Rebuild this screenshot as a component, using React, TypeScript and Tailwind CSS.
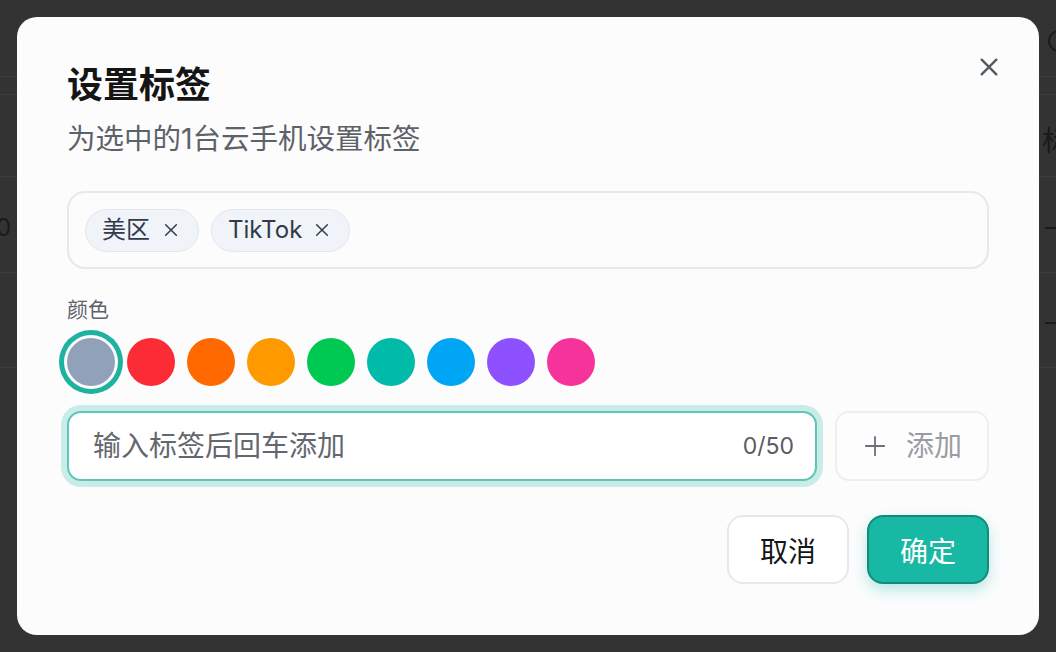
import React from "react";

const font = { fontFamily: 'Inter, "Noto Sans CJK SC", sans-serif' };

function XIcon({ size, stroke, className }: { size: number; stroke: number; className?: string }) {
  return (
    <svg width={size} height={size} viewBox="0 0 24 24" fill="none" stroke="currentColor" strokeWidth={stroke} strokeLinecap="round" className={className}>
      <path d="M4 4L20 20M20 4L4 20" />
    </svg>
  );
}

const colors = [
  "bg-red-500",
  "bg-orange-500",
  "bg-amber-500",
  "bg-green-500",
  "bg-teal-500",
  "bg-sky-500",
  "bg-violet-500",
  "bg-pink-500",
];

export default function App() {
  return (
    <div className="relative w-[1056px] h-[652px] overflow-hidden bg-[#333333]" style={font}>
      {/* background page (dimmed) */}
      <div className="absolute inset-0 flex flex-col">
        <div className="h-[77px] border-b border-[#3d3d3d]" />
        <div className="h-[18px] border-b border-[#3d3d3d]" />
        <div className="h-[82px] border-b border-[#3d3d3d]" />
        <div className="h-[96px] border-b border-[#3d3d3d]" />
        <div className="h-[95px] border-b border-[#3d3d3d]" />
      </div>
      <div className="absolute left-[-4px] top-[210px] text-[24px] text-[#1a1a1a]">0</div>
      <div className="absolute left-[1048px] top-[30px] w-[22px] h-[22px] rounded-full border-2 border-[#1c1c1c]" />
      <div className="absolute left-[1042px] top-[120px] text-[28px] text-[#1a1a1a]">标</div>
      <div className="absolute left-[1045px] top-[227px] w-[12px] h-[2px] bg-[#1a1a1a]" />
      <div className="absolute left-[1045px] top-[322px] w-[12px] h-[2px] bg-[#1a1a1a]" />

      {/* modal */}
      <div className="absolute inset-0 flex items-center justify-center">
        <div className="relative w-[1022px] h-[618px] rounded-[20px] bg-[#fcfcfd] px-[50px] pt-[46px] flex flex-col">
          <button className="absolute right-[39px] top-[39px] text-[#555b63]">
            <XIcon size={22} stroke={2.6} />
          </button>

          <div className="h-[44px] leading-[44px] text-[36px] font-bold text-[#151515]">设置标签</div>
          <div className="mt-[14px] h-[36px] leading-[36px] text-[28.5px] text-[#5d6168]">为选中的1台云手机设置标签</div>

          <div className="mt-[34px] h-[78px] rounded-[18px] border-2 border-[#e7e8ec] flex items-center gap-[12px] pl-[16px]">
            <div className="h-[43px] flex items-center gap-[13px] pl-[16px] pr-[19px] rounded-full bg-[#f0f3f8] border border-[#e2e7ef] text-[24px] text-[#2f3a4b]">
              <span>美区</span>
              <XIcon size={16} stroke={2.2} />
            </div>
            <div className="h-[43px] flex items-center gap-[12px] pl-[16px] pr-[19px] rounded-full bg-[#f0f3f8] border border-[#e2e7ef] text-[24px] text-[#2f3a4b]">
              <span>TikTok</span>
              <XIcon size={16} stroke={2.2} />
            </div>
          </div>

          <div className="mt-[26px] h-[30px] leading-[30px] text-[21px] text-[#5d6168]">颜色</div>
          <div className="mt-[13px] flex gap-[12px]">
            <div className="w-[48px] h-[48px] rounded-full bg-slate-400 ring-[5px] ring-[#1fb2a1] ring-offset-[3px] ring-offset-[#fcfcfd]" />
            {colors.map((c) => (
              <div key={c} className={`w-[48px] h-[48px] rounded-full ${c}`} />
            ))}
          </div>

          <div className="mt-[25px] flex gap-[18px]">
            <div className="w-[750px] h-[70px] rounded-[14px] border-2 border-[#5cc6b9] ring-[6px] ring-[#c9ece8] flex items-center justify-between pl-[24px] pr-[21px] bg-white">
              <span className="text-[28px] text-[#63676e]">输入标签后回车添加</span>
              <span className="text-[23px] text-[#585c63]">0/50</span>
            </div>
            <div className="w-[154px] h-[70px] rounded-[14px] border-2 border-[#efeff1] bg-[#fdfdfd] flex items-center justify-center gap-[20px] text-[#999ca1] pl-[2px]">
              <svg width="22" height="22" viewBox="0 0 24 24" fill="none" stroke="#6d7077" strokeWidth="2" strokeLinecap="round">
                <path d="M12 2V22M2 12H22" />
              </svg>
              <span className="text-[28px]">添加</span>
            </div>
          </div>

          <div className="mt-[34px] flex justify-end gap-[18px]">
            <button className="w-[122px] h-[69px] pt-[4px] rounded-[16px] border-2 border-[#e8e8ea] bg-white text-[28px] text-[#151515]">取消</button>
            <button className="w-[122px] h-[69px] pt-[4px] rounded-[16px] border-2 border-[#138a7d] bg-[#17b8a4] text-[28px] text-white shadow-[0_6px_14px_rgba(23,184,164,0.3)]">确定</button>
          </div>
        </div>
      </div>
    </div>
  );
}
